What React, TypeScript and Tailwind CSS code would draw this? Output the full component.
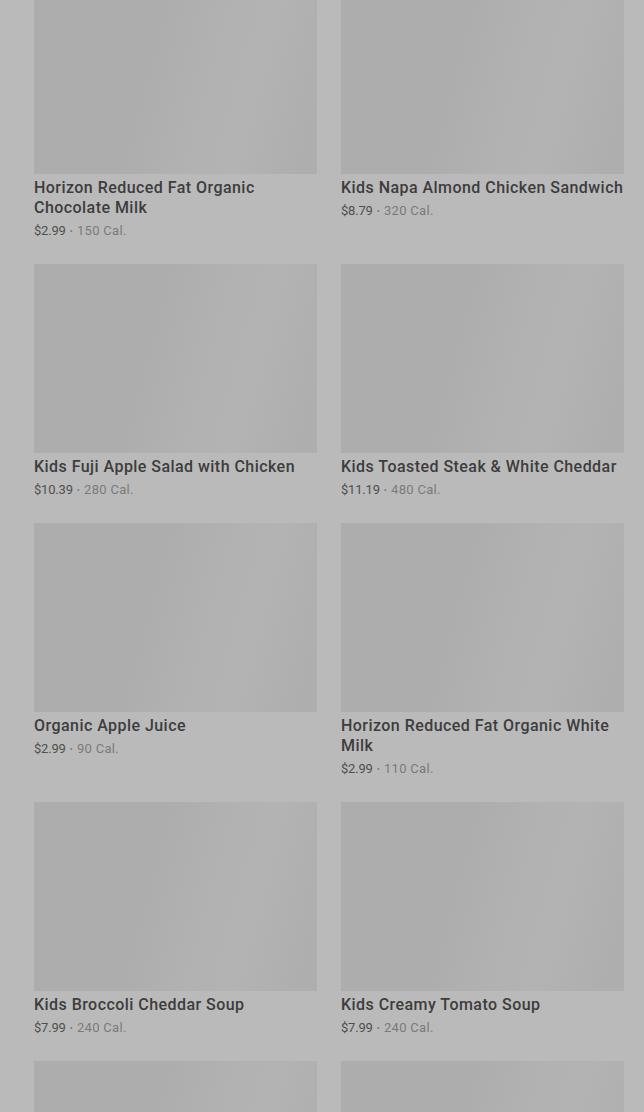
const items = [
  { name: 'Horizon Reduced Fat Organic Chocolate Milk', price: '$2.99', cal: '150 Cal.' },
  { name: 'Kids Napa Almond Chicken Sandwich', price: '$8.79', cal: '320 Cal.' },
  { name: 'Kids Fuji Apple Salad with Chicken', price: '$10.39', cal: '280 Cal.' },
  { name: 'Kids Toasted Steak & White Cheddar', price: '$11.19', cal: '480 Cal.' },
  { name: 'Organic Apple Juice', price: '$2.99', cal: '90 Cal.' },
  { name: 'Horizon Reduced Fat Organic White Milk', price: '$2.99', cal: '110 Cal.' },
  { name: 'Kids Broccoli Cheddar Soup', price: '$7.99', cal: '240 Cal.' },
  { name: 'Kids Creamy Tomato Soup', price: '$7.99', cal: '240 Cal.' },
];

const photo = 'h-[189px] w-full bg-[linear-gradient(105deg,#adadad_40%,#b2b2b2_62%,#b3b3b3_75%,#aeaeae_95%)]';

function MenuItem({ name, price, cal }: { name: string; price: string; cal: string }) {
  return (
    <div className="flex flex-col">
      <div className={photo} />
      <div className="mt-[4px] text-[16px] leading-5 font-medium tracking-[0.45px] text-[#3d3d3d]">{name}</div>
      <div className="mt-[4px] text-[13px] leading-[18px] text-[#7a7a7a] tracking-[0.3px]">
        <span className="text-[#4f4f4f] tracking-[-0.2px]">{price}</span>
        <span className="mx-[4px] text-[9px] align-[1px]">•</span>
        <span>{cal}</span>
      </div>
    </div>
  );
}

export default function App() {
  return (
    <div
      className="h-[1112px] w-[644px] overflow-hidden bg-[#bababa]"
      style={{ fontFamily: 'Roboto, "Noto Sans", sans-serif' }}
    >
      <div className="-mt-[15px] grid grid-cols-2 gap-x-6 gap-y-[24px] pl-[34px] pr-[20px]">
        {items.map((it, i) => (
          <MenuItem key={i} {...it} />
        ))}
        <div className={photo} />
        <div className={photo} />
      </div>
    </div>
  );
}
